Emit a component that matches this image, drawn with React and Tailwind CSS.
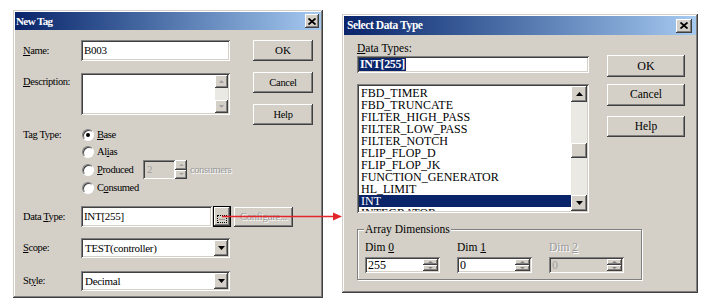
import React from "react";

const RAISED =
  "shadow-[inset_-1px_-1px_0_#404040,inset_1px_1px_0_#ffffff,inset_-2px_-2px_0_#808080,inset_2px_2px_0_#d4d0c8]";
const SUNKEN =
  "shadow-[inset_1px_1px_0_#808080,inset_-1px_-1px_0_#ffffff,inset_2px_2px_0_#404040,inset_-2px_-2px_0_#d4d0c8]";
const WINDOW =
  "shadow-[inset_-1px_-1px_0_#404040,inset_1px_1px_0_#d4d0c8,inset_-2px_-2px_0_#808080,inset_2px_2px_0_#ffffff]";

function CloseBtn({ w = 14, h = 14 }) {
  return (
    <div
      className={`${RAISED} bg-[#d4d0c8] flex items-center justify-center`}
      style={{ width: w, height: h }}
    >
      <svg width="8" height="7" viewBox="0 0 8 7">
        <path d="M0.5 0.5 L7.5 6.5 M7.5 0.5 L0.5 6.5" stroke="#000" strokeWidth="1.8" />
      </svg>
    </div>
  );
}

function Arrow({ dir = "down", color = "#000", w = 7, h = 4 }) {
  const d = dir === "down" ? `M0 0 L${w} 0 L${w / 2} ${h} Z` : `M0 ${h} L${w} ${h} L${w / 2} 0 Z`;
  return (
    <svg width={w} height={h} viewBox={`0 0 ${w} ${h}`}>
      <path d={d} fill={color} />
    </svg>
  );
}

function Btn({ children, className = "", text = "" }) {
  return (
    <div className={`${RAISED} bg-[#d4d0c8] flex items-center justify-center ${className}`}>
      <span className={text}>{children}</span>
    </div>
  );
}

function Radio({ checked }) {
  return (
    <div className="w-[12px] h-[12px] rounded-full border border-t-[#808080] border-l-[#808080] border-r-white border-b-white bg-white flex items-center justify-center shadow-[inset_1px_1px_0_#404040]">
      {checked && <div className="w-[4px] h-[4px] rounded-full bg-black" />}
    </div>
  );
}

function U({ children }) {
  return <span className="underline underline-offset-[1px]">{children}</span>;
}

function Combo({ value, className = "" }) {
  return (
    <div className={`${SUNKEN} bg-white p-[2px] flex ${className}`}>
      <div className="flex-1 flex items-center pl-[2px] text-[11px] tracking-[-0.3px] text-black">{value}</div>
      <div className={`${RAISED} bg-[#d4d0c8] w-[14px] flex items-center justify-center`}>
        <Arrow dir="down" />
      </div>
    </div>
  );
}

function SpinField({ value, disabled }) {
  return (
    <div className={`${SUNKEN} ${disabled ? "bg-[#d4d0c8]" : "bg-white"} p-[2px] flex w-[75px] h-[16px]`}>
      <div className={`flex-1 flex items-center pl-[1px] text-[12px] leading-none ${disabled ? "text-[#a0a0a0]" : "text-black"}`}>
        {value}
      </div>
      <div className="w-[15px] flex flex-col">
        <div className={`${RAISED} bg-[#d4d0c8] flex-1 flex items-center justify-center`}>
          <Arrow dir="up" color="#808080" w={5} h={2} />
        </div>
        <div className={`${RAISED} bg-[#d4d0c8] flex-1 flex items-center justify-center`}>
          <Arrow dir="down" color="#808080" w={5} h={2} />
        </div>
      </div>
    </div>
  );
}

function NewTag() {
  const label = "w-[58px] shrink-0 text-[10.5px] tracking-[-0.4px] text-black";
  return (
    <div className={`${WINDOW} bg-[#d4d0c8] w-[310px] h-[288px] mt-[10px] p-[2px] flex flex-col shrink-0`}>
      <div className="h-[18px] bg-gradient-to-r from-[#0a246a] to-[#a6caf0] flex items-center justify-between pl-[1px] pr-[2px]">
        <span className="text-white font-bold text-[11px] tracking-[-0.6px] leading-none">New Tag</span>
        <CloseBtn />
      </div>
      <div className="flex pl-[8px]">
        <div className="w-[207px] flex flex-col">
          <div className="mt-[10px] h-[21px] flex items-center">
            <div className={label}>
              <U>N</U>ame:
            </div>
            <div className={`${SUNKEN} bg-white w-[149px] h-full flex items-center pl-[3px] text-[11px] tracking-[-0.3px]`}>
              B003
            </div>
          </div>
          <div className="mt-[12px] h-[42px] flex items-start">
            <div className={`${label} pt-[1px]`}>
              <U>D</U>escription:
            </div>
            <div className={`${SUNKEN} bg-white w-[149px] h-full p-[2px] flex justify-end`}>
              <div className="w-[13px] flex flex-col bg-[#ebe9e4]">
                <div className={`${RAISED} bg-[#d4d0c8] h-[13px] flex items-center justify-center`}>
                  <Arrow dir="up" color="#a0a0a0" w={5} h={3} />
                </div>
                <div className="flex-1" />
                <div className={`${RAISED} bg-[#d4d0c8] h-[13px] flex items-center justify-center`}>
                  <Arrow dir="down" color="#a0a0a0" w={5} h={3} />
                </div>
              </div>
            </div>
          </div>
          <div className="mt-[11px] flex">
            <div className={`${label} h-[17px] flex items-center`}>Tag Type:</div>
            <div className="flex flex-col text-[10.5px] tracking-[-0.4px]">
              <div className="h-[17px] flex items-center gap-[3px] pl-[1px]">
                <Radio checked />
                <span>
                  <U>B</U>ase
                </span>
              </div>
              <div className="h-[17px] flex items-center gap-[3px] pl-[1px]">
                <Radio />
                <span>
                  Al<U>i</U>as
                </span>
              </div>
              <div className="h-[19px] flex items-center pl-[1px]">
                <div className="w-[61px] flex items-center gap-[3px]">
                  <Radio />
                  <span>
                    <U>P</U>roduced
                  </span>
                </div>
                <div className={`${SUNKEN} bg-[#d4d0c8] w-[32px] h-[19px] flex items-center pl-[4px] text-[#a0a0a0] text-[11px]`}>
                  2
                </div>
                <div className="w-[12px] h-[19px] flex flex-col">
                  <div className={`${RAISED} bg-[#d4d0c8] flex-1 flex items-center justify-center`}>
                    <Arrow dir="up" color="#a0a0a0" w={5} h={2} />
                  </div>
                  <div className={`${RAISED} bg-[#d4d0c8] flex-1 flex items-center justify-center`}>
                    <Arrow dir="down" color="#a0a0a0" w={5} h={2} />
                  </div>
                </div>
                <span className="ml-[3px] text-[#9a9a9a] [text-shadow:1px_1px_0_#ffffff]">consumers</span>
              </div>
              <div className="h-[17px] flex items-center gap-[3px] pl-[1px]">
                <Radio />
                <span>
                  C<U>o</U>nsumed
                </span>
              </div>
            </div>
          </div>
          <div className="mt-[10px] h-[21px] flex items-center">
            <div className={label}>
              Data <U>T</U>ype:
            </div>
            <div className={`${SUNKEN} bg-white w-[131px] h-full flex items-center pl-[3px] text-[11px] tracking-[-0.3px] shrink-0`}>
              INT[255]
            </div>
            <div className="ml-[1px] w-[18px] h-full border border-black shrink-0">
              <div className={`${RAISED} bg-[#d4d0c8] w-full h-full flex items-end justify-center pb-[3px]`}>
                <div className="w-[10px] h-[8px] border border-dotted border-black flex items-end justify-center text-[8px] leading-none">
                  ...
                </div>
              </div>
            </div>
            <div className={`${RAISED} bg-[#d4d0c8] ml-[3px] w-[59px] h-[20px] shrink-0 flex items-center justify-center text-[10.5px] tracking-[-0.3px] text-[#9a9a9a] [text-shadow:1px_1px_0_#ffffff]`}>
              Configure...
            </div>
          </div>
          <div className="mt-[11px] h-[20px] flex items-center">
            <div className={label}>
              <U>S</U>cope:
            </div>
            <Combo value="TEST(controller)" className="w-[149px] h-full" />
          </div>
          <div className="mt-[13px] h-[20px] flex items-center">
            <div className={label}>
              St<U>y</U>le:
            </div>
            <Combo value="Decimal" className="w-[149px] h-full" />
          </div>
        </div>
        <div className="ml-[23px] w-[60px] flex flex-col">
          <Btn className="mt-[10px] h-[21px]" text="text-[11px]">OK</Btn>
          <Btn className="mt-[11px] h-[21px]" text="text-[10.5px] tracking-[-0.3px]">Cancel</Btn>
          <Btn className="mt-[11px] h-[21px]" text="text-[10.5px] tracking-[-0.3px]">Help</Btn>
        </div>
      </div>
    </div>
  );
}

const ITEMS = [
  "FBD_TIMER",
  "FBD_TRUNCATE",
  "FILTER_HIGH_PASS",
  "FILTER_LOW_PASS",
  "FILTER_NOTCH",
  "FLIP_FLOP_D",
  "FLIP_FLOP_JK",
  "FUNCTION_GENERATOR",
  "HL_LIMIT",
  "INT",
  "INTEGRATOR",
];

function SelectDataType() {
  return (
    <div className={`${WINDOW} bg-[#d4d0c8] w-[356px] h-[279px] mt-[14px] p-[2px] flex flex-col shrink-0`}>
      <div className="h-[19px] bg-gradient-to-r from-[#0a246a] to-[#a6caf0] flex items-center justify-between pl-[3px] pr-[4px]">
        <span className="text-white font-bold text-[11.5px] tracking-[-0.4px] leading-none">Select Data Type</span>
        <CloseBtn w={16} h={14} />
      </div>
      <div className="pl-[13px] flex flex-col">
        <div className="flex">
          <div className="w-[232px] flex flex-col">
            <div className="mt-[6px] h-[14px] leading-[14px] text-[11.5px]">
              <U>D</U>ata Types:
            </div>
            <div className={`${SUNKEN} bg-white mt-[1px] h-[17px] flex items-center pl-[2px]`}>
              <span className="bg-[#0a246a] text-white font-bold text-[12px] leading-[13px] px-[1px] tracking-[-0.3px]">INT[255]</span>
            </div>
            <div className={`${SUNKEN} bg-white mt-[11px] h-[129px] p-[2px] flex`}>
              <div className="flex-1 overflow-hidden flex flex-col pt-[1px]">
                {ITEMS.map((it) => (
                  <div
                    key={it}
                    className={`h-[12px] leading-[12px] text-[12px] pl-[2px] shrink-0 ${it === "INT" ? "bg-[#0a246a] text-white" : "text-black"}`}
                  >
                    {it}
                  </div>
                ))}
              </div>
              <div className="w-[16px] flex flex-col bg-[#ebe9e4]">
                <div className={`${RAISED} bg-[#d4d0c8] h-[16px] flex items-center justify-center`}>
                  <Arrow dir="up" w={7} h={4} />
                </div>
                <div className="h-[41px]" />
                <div className={`${RAISED} bg-[#d4d0c8] h-[15px]`} />
                <div className="flex-1" />
                <div className={`${RAISED} bg-[#d4d0c8] h-[16px] flex items-center justify-center`}>
                  <Arrow dir="down" w={7} h={4} />
                </div>
              </div>
            </div>
          </div>
          <div className="ml-[18px] w-[78px] flex flex-col">
            <Btn className="mt-[20px] h-[22px]" text="text-[12px]">OK</Btn>
            <Btn className="mt-[7px] h-[22px]" text="text-[11.5px]">Cancel</Btn>
            <Btn className="mt-[10px] h-[21px]" text="text-[11.5px]">Help</Btn>
          </div>
        </div>
        <div className="relative mt-[16px] w-[285px] h-[51px] border border-[#808080] shadow-[inset_1px_1px_0_#ffffff,1px_1px_0_#ffffff]">
          <div className="absolute top-[-9px] left-[6px] px-[1px] bg-[#d4d0c8] text-[11.5px] leading-[16px]">
            Array Dimensions
          </div>
          <div className="flex gap-[17px] pl-[7px] pt-[10px]">
            <div className="flex flex-col">
              <div className="h-[14px] leading-[14px] text-[11.5px]">
                Dim <U>0</U>
              </div>
              <div className="mt-[3px]">
                <SpinField value="255" />
              </div>
            </div>
            <div className="flex flex-col">
              <div className="h-[14px] leading-[14px] text-[11.5px]">
                Dim <U>1</U>
              </div>
              <div className="mt-[3px]">
                <SpinField value="0" />
              </div>
            </div>
            <div className="flex flex-col">
              <div className="h-[14px] leading-[14px] text-[11.5px] text-[#9a9a9a] [text-shadow:1px_1px_0_#ffffff]">
                Dim <U>2</U>
              </div>
              <div className="mt-[3px]">
                <SpinField value="0" disabled />
              </div>
            </div>
          </div>
        </div>
      </div>
    </div>
  );
}

export default function App() {
  return (
    <div className="relative w-[708px] h-[301px] bg-white overflow-hidden font-['Liberation_Serif',serif] text-black">
      <div className="flex items-start pl-[13px] gap-[19px]">
        <NewTag />
        <SelectDataType />
      </div>
      <svg className="absolute left-0 top-0 pointer-events-none" width="708" height="301" viewBox="0 0 708 301">
        <line x1="222" y1="216.5" x2="335" y2="216.5" stroke="#e3262b" strokeWidth="1.3" />
        <path d="M333 212.5 L342 216.5 L333 220.5 Z" fill="#e3262b" />
      </svg>
    </div>
  );
}
